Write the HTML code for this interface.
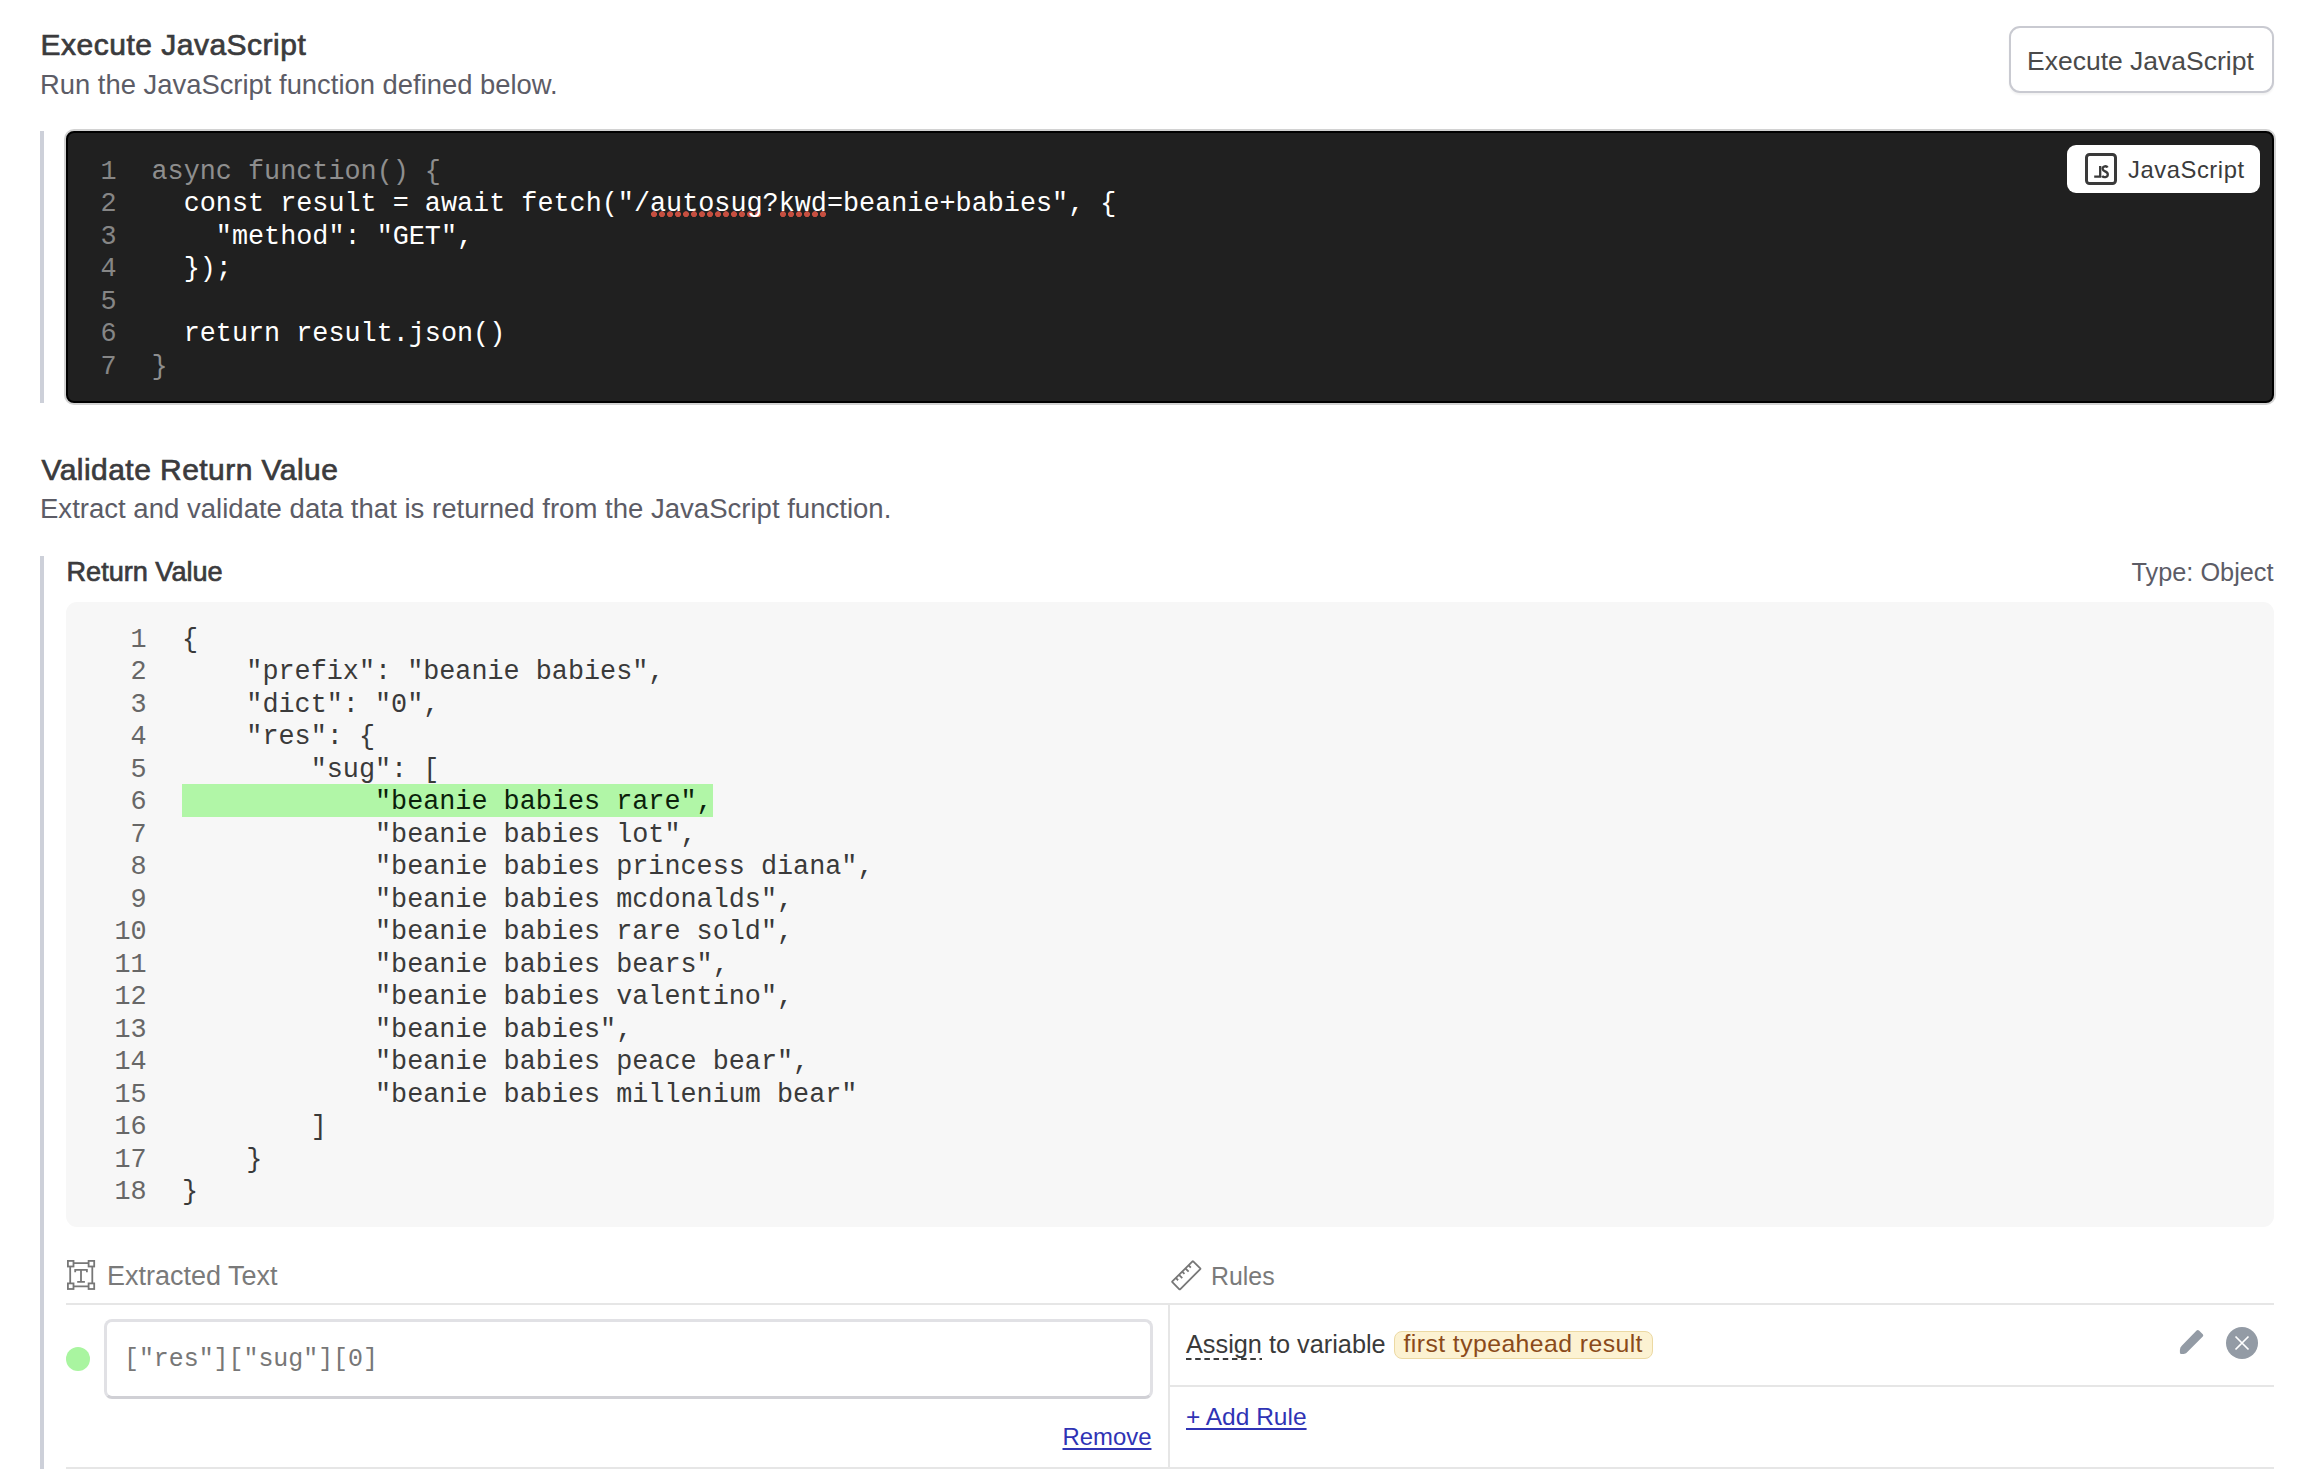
<!DOCTYPE html>
<html>
<head>
<meta charset="utf-8">
<style>
html,body{margin:0;padding:0;background:#fff;}
body{width:2312px;height:1484px;position:relative;overflow:hidden;font-family:"Liberation Sans",sans-serif;}
.a{position:absolute;white-space:pre;line-height:1;}
.mono{font-family:"Liberation Mono",monospace;}
.title{font-weight:normal;color:#3b3b3d;-webkit-text-stroke:0.7px #3b3b3d;}
.sub{color:#5c5c66;}
.bar{position:absolute;left:40px;width:4px;background:#cdd0d9;}
.hl{position:absolute;background:#e6e6e6;}
.code{position:absolute;font-family:"Liberation Mono",monospace;font-size:26.8px;line-height:32.5px;}
.code div{height:32.5px;white-space:pre;}
.sp{background-image:radial-gradient(circle at 4px 25.2px,#c64f40 2.6px,rgba(198,79,64,0) 3.3px);background-size:8px 100%;background-repeat:repeat-x;}
</style>
</head>
<body>

<!-- Section 1 -->
<div class="a title" style="left:40.5px;top:29.6px;font-size:30px;letter-spacing:0.5px;">Execute JavaScript</div>
<div class="a sub" style="left:40px;top:70.5px;font-size:27.4px;">Run the JavaScript function defined below.</div>

<div style="position:absolute;left:2009px;top:26px;width:261px;height:63px;border:2px solid #c9cad1;border-radius:11px;background:#fff;box-shadow:0 2px 2px rgba(0,0,0,0.05);"></div>
<div class="a" style="left:2027px;top:47.6px;font-size:26.5px;color:#4a4a4a;">Execute JavaScript</div>

<div class="bar" style="top:131px;height:272px;"></div>

<div style="position:absolute;left:66px;top:131px;width:2204px;height:268px;border:2px solid #000;border-radius:8px;background:#202020;box-shadow:0 0 0 2px #d2d2d2;"></div>

<div class="code" style="left:99.5px;top:155.5px;color:#868686;width:17px;text-align:right;">
<div>1</div><div>2</div><div>3</div><div>4</div><div>5</div><div>6</div><div>7</div>
</div>
<div class="code" style="left:151.5px;top:155.5px;color:#fff;">
<div style="color:#8e8e8e">async function() {</div><div>  const result = await fetch("/<span class="sp">autosug</span>?<span class="sp">kwd</span>=beanie+babies", {</div><div>    "method": "GET",</div><div>  });</div><div> </div><div>  return result.json()</div><div style="color:#8e8e8e">}</div>
</div>

<div style="position:absolute;left:2067px;top:145px;width:193px;height:48px;background:#fff;border-radius:9px;"></div>
<svg style="position:absolute;left:2084px;top:152px;" width="34" height="34" viewBox="0 0 34 34">
<rect x="2.5" y="2.5" width="29" height="29" rx="3" fill="none" stroke="#3a3a3a" stroke-width="3"/>
<path d="M16.2 14 V24.6 H10.2" fill="none" stroke="#3a3a3a" stroke-width="2.3"/>
<path d="M23.6 15.6 C22.6 13.6 18.6 13.8 18.6 16.8 C18.6 19.8 23.8 19 23.8 22.4 C23.8 25.6 19.4 25.8 18.2 23.8" fill="none" stroke="#3a3a3a" stroke-width="2.3"/>
</svg>
<div class="a" style="left:2128px;top:157.8px;font-size:23.8px;letter-spacing:0.55px;color:#3b3b3b;">JavaScript</div>

<!-- Section 2 -->
<div class="a title" style="left:41.5px;top:454.9px;font-size:30px;letter-spacing:0.45px;">Validate Return Value</div>
<div class="a sub" style="left:40px;top:495px;font-size:27.55px;">Extract and validate data that is returned from the JavaScript function.</div>

<div class="bar" style="top:556px;height:913px;"></div>

<div class="a title" style="left:66.5px;top:557.8px;font-size:27.1px;">Return Value</div>
<div class="a sub" style="right:38.5px;top:559.9px;font-size:25.3px;">Type: Object</div>

<div style="position:absolute;left:66px;top:602px;width:2208px;height:625px;background:#f7f7f7;border-radius:11px;"></div>
<div style="position:absolute;left:182px;top:784px;width:531px;height:32.5px;background:#b1f6a7;"></div>

<div class="code" style="left:100.7px;top:623.5px;color:#676767;width:46px;text-align:right;">
<div>1</div><div>2</div><div>3</div><div>4</div><div>5</div><div>6</div><div>7</div><div>8</div><div>9</div><div>10</div><div>11</div><div>12</div><div>13</div><div>14</div><div>15</div><div>16</div><div>17</div><div>18</div>
</div>
<div class="code" style="left:182px;top:623.5px;color:#3a3a3a;">
<div>{</div><div>    "prefix": "beanie babies",</div><div>    "dict": "0",</div><div>    "res": {</div><div>        "sug": [</div><div style="color:#0b1f0b">            "beanie babies rare",</div><div>            "beanie babies lot",</div><div>            "beanie babies princess diana",</div><div>            "beanie babies mcdonalds",</div><div>            "beanie babies rare sold",</div><div>            "beanie babies bears",</div><div>            "beanie babies valentino",</div><div>            "beanie babies",</div><div>            "beanie babies peace bear",</div><div>            "beanie babies millenium bear"</div><div>        ]</div><div>    }</div><div>}</div>
</div>

<!-- Extracted text / rules -->
<div class="a" style="left:107px;top:1262.5px;font-size:27px;color:#7a7a7a;">Extracted Text</div>
<div class="a" style="left:1211px;top:1263.9px;font-size:24.9px;color:#7a7a7a;">Rules</div>

<div class="hl" style="left:66px;top:1303px;width:2208px;height:2px;"></div>
<div class="hl" style="left:1168px;top:1305px;width:2px;height:162px;"></div>
<div class="hl" style="left:1170px;top:1385px;width:1104px;height:2px;"></div>
<div class="hl" style="left:66px;top:1467px;width:2208px;height:2px;"></div>

<div style="position:absolute;left:66px;top:1347px;width:24px;height:24px;border-radius:50%;background:#a9f5a0;"></div>
<div style="position:absolute;left:104px;top:1319px;width:1043px;height:74px;border:3px solid #e1e1e5;border-bottom-color:#d0d0d5;border-radius:8px;background:#fff;"></div>
<div class="a mono" style="left:124px;top:1346.5px;font-size:24.9px;color:#777;">["res"]["sug"][0]</div>
<div class="a" style="left:1062.5px;top:1425.2px;font-size:23.9px;color:#2f33b5;text-decoration:underline;text-decoration-thickness:2px;text-underline-offset:3px;">Remove</div>

<div class="a" style="left:1186px;top:1332.4px;font-size:25.3px;color:#3a3a3a;"><span style="display:inline-block;background:linear-gradient(to right,#3a3a3a 5.6px,rgba(0,0,0,0) 5.6px) 0 100%/9.2px 2px repeat-x;padding-bottom:2.5px;">Assign</span> to variable</div>
<div style="position:absolute;left:1394px;top:1331px;width:257px;height:26px;border:1px solid #ecd9a3;border-radius:8px;background:#fcf2d2;"></div>
<div class="a" style="left:1403.5px;top:1332.4px;font-size:24.8px;letter-spacing:0.42px;color:#8a4a1a;">first typeahead result</div>
<div class="a" style="left:1186px;top:1405px;font-size:24.5px;color:#2f33b5;text-decoration:underline;text-decoration-thickness:2px;text-underline-offset:3px;">+ Add Rule</div>


<svg style="position:absolute;left:66px;top:1259px;" width="31" height="32" viewBox="0 0 31 32">
<g fill="none" stroke="#777" stroke-width="1.8">
<rect x="1.9" y="1.9" width="5.6" height="5.6"/>
<rect x="22.6" y="1.9" width="5.6" height="5.6"/>
<rect x="1.9" y="24.4" width="5.6" height="5.6"/>
<rect x="22.6" y="24.4" width="5.6" height="5.6"/>
<path d="M7.5 4.2 H22.6 M7.5 27.3 H22.6 M4.2 7.5 V24.4 M26.3 7.5 V24.4"/>
<path d="M9.2 13.2 V10.8 H20.9 V13.2 M15 10.8 V22.8 M11.2 22.8 H18.9"/>
</g>
</svg>
<svg style="position:absolute;left:1170px;top:1259px;" width="33" height="33" viewBox="0 0 33 33">
<g transform="rotate(-45 16.3 16.3)" fill="none" stroke="#777" stroke-width="1.8">
<rect x="1.55" y="10.8" width="29.5" height="11" rx="0.5"/>
<path d="M7 10.8 V14 M11.5 10.8 V15.4 M16 10.8 V14 M20.5 10.8 V15.4 M25 10.8 V14"/>
</g>
</svg>
<svg style="position:absolute;left:2179px;top:1329px;" width="26" height="26" viewBox="0 0 26 26">
<path d="M17.6 1.4 Q18.8 0.4 20 1.4 L23.8 5.2 Q24.8 6.4 23.8 7.6 L8.6 22.8 Q7.4 24.9 4.8 24.9 L2.4 24.9 Q0.9 24.9 0.9 23.4 L0.9 20.9 Q0.9 18.4 3 16.6 Z" fill="#939ba5"/>
</svg>
<svg style="position:absolute;left:2226px;top:1327px;" width="32" height="32" viewBox="0 0 32 32">
<circle cx="16" cy="16" r="16" fill="#939ba5"/>
<path d="M9.5 9.5 L22.5 22.5 M22.5 9.5 L9.5 22.5" stroke="#fff" stroke-width="1.7"/>
</svg>
</body>
</html>
